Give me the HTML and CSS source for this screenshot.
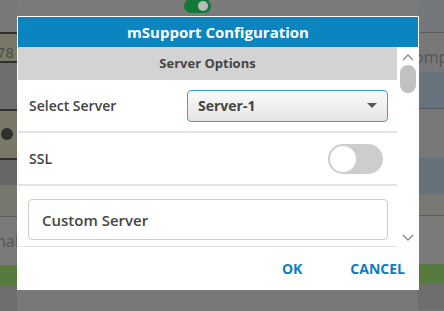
FILE: index.html
```html
<!DOCTYPE html>
<html>
<head>
<meta charset="utf-8">
<link rel="stylesheet" href="styles.css">
</head>
<body>
<div class="app">
  <div class="side side-left">
    <div class="band b-l1"></div>
    <div class="band b-l2"><span class="mono">78:</span></div>
    <div class="band b-l3"></div>
    <div class="band b-l4"><span class="dot"></span></div>
    <div class="band b-l5"></div>
    <div class="band b-l6"></div>
    <div class="band b-l7"><span class="faint">nal</span></div>
    <div class="band b-green"></div>
    <div class="band b-bottom"></div>
  </div>
  <div class="mid">
    <div class="mid-top"><span class="bg-toggle"><span class="bg-knob"></span></span></div>
  </div>
  <div class="side side-right">
    <div class="band b-r1"></div>
    <div class="band b-r2"><span class="faint">omp</span></div>
    <div class="band b-r3"></div>
    <div class="band b-r4"></div>
    <div class="band b-r5"></div>
    <div class="band b-r6"></div>
    <div class="band b-r7"></div>
    <div class="band b-green"></div>
    <div class="band b-bottom"></div>
  </div>
</div>

<div class="dialog">
  <div class="dlg-title">mSupport Configuration</div>
  <div class="dlg-body">
    <div class="dlg-content">
      <div class="section-head">Server Options</div>
      <div class="row">
        <span class="label">Select Server</span>
        <div class="select"><span>Server-1</span><span class="caret"></span></div>
      </div>
      <div class="row">
        <span class="label">SSL</span>
        <span class="switch"><span class="switch-knob"></span></span>
      </div>
      <div class="row row-box">
        <div class="box">Custom Server</div>
      </div>
    </div>
    <div class="scrollbar">
      <svg class="sb-arrow" width="12" height="8" viewBox="0 0 12 8"><path d="M1 7 L6 2 L11 7" fill="none" stroke="#888" stroke-width="1.3"/></svg>
      <div class="sb-thumb"></div>
      <div class="sb-space"></div>
      <svg class="sb-arrow" width="12" height="8" viewBox="0 0 12 8"><path d="M1 1 L6 6 L11 1" fill="none" stroke="#888" stroke-width="1.3"/></svg>
    </div>
  </div>
  <div class="dlg-footer">
    <span class="btn">OK</span>
    <span class="btn">CANCEL</span>
  </div>
</div>
</body>
</html>
```

FILE: styles.css
```css
html, body {
  margin: 0;
  padding: 0;
}
body {
  width: 444px;
  height: 311px;
  overflow: hidden;
  background: #777777;
  font-family: "Open Sans", "DejaVu Sans", sans-serif;
}
.app {
  display: grid;
  grid-template-columns: 17px 1fr 26px;
  height: 311px;
}
.side {
  display: flex;
  flex-direction: column;
  overflow: hidden;
}
.band {
  flex: none;
  box-sizing: border-box;
  overflow: hidden;
  white-space: nowrap;
}
.b-l1 { height: 34px; background: #787878; border-bottom: 2px solid #2f2f2f; }
.b-l2 { height: 29px; background: #7a7869; border-bottom: 2px solid #2f2f2f; padding-top: 7px; }
.b-l3 { height: 48px; background: #6f6f6f; border-bottom: 2px solid #2f2f2f; }
.b-l4 { height: 49px; background: #7a7869; border-bottom: 2px solid #2f2f2f; padding: 17px 0 0 1px; }
.b-l5 { height: 25px; background: #676767; }
.b-l6 { height: 32px; background: #77796f; border-bottom: 1px solid #5e5e5e; }
.b-l7 { height: 48px; background: #7a7a7a; padding-top: 13px; }
.b-green { height: 20px; background: #577a3e; }
.b-bottom { height: 26px; background: #6e6e6e; }

.b-r1 { height: 33px; background: #74777b; border-bottom: 1px solid #5c5c5c; }
.b-r2 { height: 39px; background: #787878; padding: 13px 0 0 0; }
.b-r3 { height: 37px; background: #67727c; border-bottom: 1px solid #555b60; }
.b-r4 { height: 49px; background: #787878; }
.b-r5 { height: 36px; background: #66727b; }
.b-r6 { height: 22px; background: #777a72; border-bottom: 1px solid #5e5e5e; }
.b-r7 { height: 48px; background: #7a7a7a; }

.mono {
  font-family: "DejaVu Sans Mono", monospace;
  font-size: 14px;
  color: #4d4d48;
  margin-left: -3px;
}
.faint {
  font-family: "Open Sans", sans-serif;
  font-size: 16px;
  color: #555;
  margin-left: -4px;
}
.dot {
  display: block;
  width: 12px;
  height: 12px;
  border-radius: 50%;
  background: #2f2f2f;
}
.mid {
  background: #787878;
}
.mid-top {
  padding-left: 167px;
  height: 16px;
  background: #7a7a7a;
}
.bg-toggle {
  display: flex;
  justify-content: flex-end;
  align-items: center;
  box-sizing: border-box;
  width: 27px;
  height: 14px;
  margin-top: -1px;
  padding-right: 3px;
  border-radius: 8px;
  background: #127a38;
}
.bg-knob {
  width: 10px;
  height: 10px;
  border-radius: 50%;
  background: #b9b9b9;
}

/* dialog */
.dialog {
  position: absolute;
  left: 17px;
  top: 16px;
  width: 400px;
  height: 272px;
  border: 1px solid #ffffff;
  background: #ffffff;
  display: flex;
  flex-direction: column;
}
.dlg-title {
  height: 30px;
  background: #0a85bf;
  color: #ffffff;
  font-weight: 700;
  font-size: 15px;
  line-height: 30px;
  text-align: center;
}
.dlg-body {
  display: flex;
  height: 200px;
}
.dlg-content {
  width: 379px;
  overflow: hidden;
}
.section-head {
  height: 33px;
  background: #d3d3d3;
  color: #454545;
  font-weight: 700;
  font-size: 13px;
  line-height: 33px;
  text-align: center;
}
.row {
  display: flex;
  align-items: center;
  justify-content: space-between;
  height: 51px;
  padding: 0 9px 0 11px;
  border-bottom: 2px solid #e2e2e2;
}
.row:nth-of-type(3) {
  padding-right: 14px;
}
.label {
  font-size: 14px;
  font-weight: 600;
  color: #444;
}
.select {
  box-sizing: border-box;
  width: 201px;
  height: 32px;
  border: 1px solid #3aa0dc;
  border-radius: 4px;
  background: linear-gradient(#fafafa, #e5e5e5);
  display: flex;
  align-items: center;
  justify-content: space-between;
  padding: 0 10px 0 10px;
  font-size: 14px;
  font-weight: 700;
  color: #444;
}
.caret {
  width: 0;
  height: 0;
  border-left: 5px solid transparent;
  border-right: 5px solid transparent;
  border-top: 5px solid #555;
}
.switch {
  box-sizing: border-box;
  width: 55px;
  height: 30px;
  border-radius: 15px;
  background: #cdcdcd;
  padding: 2px;
  display: flex;
}
.switch-knob {
  width: 26px;
  height: 26px;
  border-radius: 50%;
  background: #ffffff;
}
.row-box {
  display: block;
  height: auto;
  padding: 13px 9px 6px 10px;
}
.box {
  box-sizing: border-box;
  height: 41px;
  border: 1px solid #cccccc;
  border-radius: 4px;
  padding: 0 13px;
  display: flex;
  align-items: center;
  font-size: 15px;
  font-weight: 600;
  color: #454545;
}
.scrollbar {
  width: 21px;
  display: flex;
  flex-direction: column;
  align-items: center;
  padding-top: 6px;
  box-sizing: border-box;
}
.sb-arrow {
  flex: none;
}
.sb-thumb {
  margin-top: 4px;
  width: 16px;
  height: 28px;
  border-radius: 8px;
  background: #c1c1c1;
}
.sb-space {
  flex: 1;
}
.scrollbar .sb-arrow:last-child {
  margin-bottom: 5px;
}
.dlg-footer {
  flex: 1;
  display: flex;
  justify-content: flex-end;
  align-items: center;
  gap: 48px;
  padding-right: 13px;
}
.btn {
  color: #0b7dc1;
  font-weight: 700;
  font-size: 14px;
}
```
